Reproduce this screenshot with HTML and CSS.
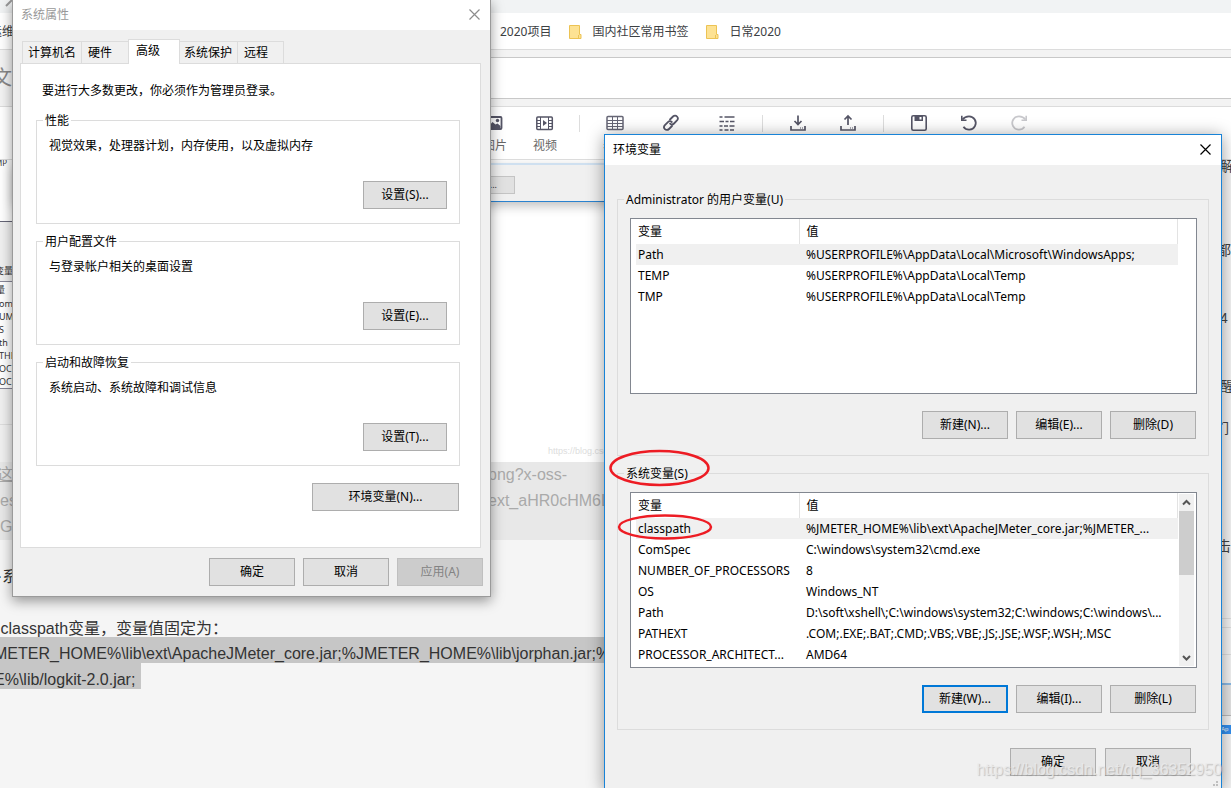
FILE: index.html
```html
<!DOCTYPE html>
<html lang="zh-CN">
<head>
<meta charset="utf-8">
<title>环境变量</title>
<link rel="stylesheet" href="styles.css">
</head>
<body>
<div class="desktop">

  <main class="browser">
    <div class="tabstrip"><svg class="tab-close" width="14" height="8" viewBox="0 0 14 8"><path d="M6 6L12 0" stroke="#999" stroke-width="2" fill="none"/></svg></div>
    <nav class="bookmarks">
      <a class="bm-first" href="#">运维</a>
      <a href="#">2020项目</a>
      <a href="#"><svg class="folder" width="13" height="15" viewBox="0 0 13 15"><path d="M.5.5h10v9h1.5v4H.5z" fill="#fde293" stroke="#ecc354"/><path d="M9.500 10v3.500" stroke="#ecc354"/></svg>国内社区常用书签</a>
      <a href="#"><svg class="folder" width="13" height="15" viewBox="0 0 13 15"><path d="M.5.5h10v9h1.5v4H.5z" fill="#fde293" stroke="#ecc354"/><path d="M9.500 10v3.500" stroke="#ecc354"/></svg>日常2020</a>
    </nav>
    <div class="title-row">
      <label class="title-label" for="title">文</label>
      <input class="title-input" id="title" type="text">
    </div>
    <div class="toolbar">
      <button class="tool"><svg width="18" height="18" viewBox="0 0 18 18"><rect x="1.500" y="3" width="14" height="12" rx="1" fill="none" stroke="#555566" stroke-width="1.800"/><path d="M3 12l3.500-4 3 2.500 2-1 3 2.500v2H3z" fill="#555566"/><circle cx="11.500" cy="6.500" r="1.700" fill="#555566"/></svg><span>图片</span></button>
      <button class="tool"><svg width="18" height="18" viewBox="0 0 18 18" fill="none" stroke="#555566"><rect x=".8" y="3" width="15.500" height="12.500" rx="1" stroke-width="1.500"/><path d="M4.500 3v12M12.500 3v12M1 6.500h3.500M1 9.500h3.500M1 12.500h3.500M12.500 6.500H16M12.500 9.500H16M12.500 12.500H16"/><path d="M7 6v6l4-3z" fill="#555566" stroke="none"/></svg><span>视频</span></button>
      <i class="sep sep-a"></i>
      <button class="tool wide"><svg width="18" height="18" viewBox="0 0 18 18" fill="none" stroke="#666675"><rect x="1" y="2.500" width="16" height="13" rx="1" stroke-width="1.500"/><path d="M1 6.500h16M1 9.500h16M1 12.500h16M6.500 3v12M11.500 3v12"/></svg><span>表格</span></button>
      <button class="tool wide"><svg width="18" height="18" viewBox="0 0 18 18" fill="none" stroke="#555566" stroke-width="1.800" stroke-linecap="round"><path d="M8 5.500l3-3c1.300-1.300 3-1.100 4 0s1.200 2.700 0 4l-3 3c-1.200 1.200-2.700 1.200-3.900.1"/><path d="M10 12l-3 3c-1.300 1.300-3 1.200-4.100.100s-1.200-2.700 0-4l3-3c1.200-1.200 2.700-1.200 3.900-.1"/></svg><span>超链接</span></button>
      <button class="tool wide"><svg width="18" height="18" viewBox="0 0 18 18" stroke="#555566" stroke-width="1.600"><path d="M1.500 3h3M6.500 3h10M1.500 7.500h4.500M7.500 7.500h3M12 7.500h4.500M1.500 12h3M6 12h4M11.500 12h5M1.500 16h3M6.500 16h4M12 16h4"/></svg><span>摘要</span></button>
      <i class="sep sep-b"></i>
      <button class="tool"><svg width="18" height="18" viewBox="0 0 18 18" fill="none" stroke="#555566" stroke-width="1.700"><path d="M9 1.500v8.500M5.500 7L9 10.500 12.500 7M2 12v4h14v-4"/><path d="M11 14h1M13 14h1" stroke-width="1"/></svg><span>导入</span></button>
      <button class="tool"><svg width="18" height="18" viewBox="0 0 18 18" fill="none" stroke="#555566" stroke-width="1.700"><path d="M9 11V2M5.500 5.500L9 2l3.500 3.500M2 12v4h14v-4"/><path d="M11 14h1M13 14h1" stroke-width="1"/></svg><span>导出</span></button>
      <i class="sep sep-c"></i>
      <button class="tool"><svg width="18" height="18" viewBox="0 0 18 18"><rect x="1.800" y="1.800" width="14.400" height="14.400" rx="1.500" fill="none" stroke="#555566" stroke-width="1.600"/><path d="M4.500 2h8.500v5H4.500z" fill="#555566"/><path d="M9.500 3h2v2.500h-2z" fill="#fff"/></svg><span>保存</span></button>
      <button class="tool"><svg width="18" height="18" viewBox="0 0 18 18" fill="none" stroke="#555566" stroke-width="1.800"><path d="M2.500 5.500C4.500 2.800 7 2.300 9 2.300a6.700 6.700 0 1 1-5.500 10.500"/><path d="M1.800 1.800v4.400h4.700" stroke-width="1.600"/></svg><span>撤销</span></button>
      <button class="tool"><svg width="18" height="18" viewBox="0 0 18 18" fill="none" stroke="#c8c8cc" stroke-width="1.800"><path d="M15.500 5.500C13.500 2.800 11 2.300 9 2.300a6.700 6.700 0 1 0 5.500 10.500"/><path d="M16.200 1.800v4.400h-4.700" stroke-width="1.600"/></svg><span>重做</span></button>
    </div>
    <div class="workspace">
      <section class="editor">
        <div class="figure">
          <div class="scrap">
            <div class="scrap-top">MP</div>
            <div class="scrap-head">变量</div>
            <div class="scrap-list"><p class="scrap-title">量</p><p>omSpec</p><p>UMBER</p><p>S</p><p>th</p><p>THEXT</p><p>OCES</p><p>OCES</p></div>
            <div class="scrap-mid"></div>
            <div class="scrap-low"></div>
          </div>
          <div class="shot">
            <div class="shot-window"><span class="shot-button">)...</span></div>
            <div class="shot-mark">https://blog.csdn.net</div>
          </div>
        </div>
        <div class="quote">
          <p><u>这里</u><span>png?x-oss-</span></p>
          <p><b>es</b><span>ext_aHR0cHM6Ly9</span></p>
          <p><b>G4</b></p>
        </div>
        <p class="line gap-a">·系统</p>
        <p class="line gap-b">:classpath变量，变量值固定为：</p>
        <p class="line first"><mark>METER_HOME%\lib\ext\ApacheJMeter_core.jar;%JMETER_HOME%\lib\jorphan.jar;%JMETER_HOM</mark></p>
        <p class="line second"><mark>E%\lib/logkit-2.0.jar; </mark></p>
      </section>
      <aside class="preview">
        <p class="pa">解</p><p class="pb">都</p><p class="pc">4</p><p class="pc">醒</p><p class="pd">们</p><p class="pe">击</p>
        <div class="bar bar-a"></div><div class="bar bar-b"></div><div class="bar bar-c"></div><div class="bar bar-d"></div><div class="bar bar-e"></div><div class="bar bar-f">Ap</div>
      </aside>
    </div>
  </main>

  <section class="window props" aria-label="系统属性">
    <header class="titlebar muted"><span>系统属性</span><button class="close" aria-label="关闭"><svg width="11" height="11" viewBox="0 0 11 11"><path d="M.5.5l10 10M10.500.5l-10 10" stroke="#8c8c8c" stroke-width="1.200"/></svg></button></header>
    <div class="props-body">
      <div class="tabs">
        <button class="tab t-name">计算机名</button><button class="tab t-hw">硬件</button><button class="tab t-adv active">高级</button><button class="tab t-prot">系统保护</button><button class="tab t-remote">远程</button>
      </div>
      <div class="panel">
        <p class="note">要进行大多数更改，你必须作为管理员登录。</p>
        <fieldset class="group"><legend>性能</legend><p>视觉效果，处理器计划，内存使用，以及虚拟内存</p><button class="btn set">设置(S)...</button></fieldset>
        <fieldset class="group"><legend>用户配置文件</legend><p>与登录帐户相关的桌面设置</p><button class="btn set">设置(E)...</button></fieldset>
        <fieldset class="group"><legend>启动和故障恢复</legend><p>系统启动、系统故障和调试信息</p><button class="btn set">设置(T)...</button></fieldset>
        <button class="btn env-btn">环境变量(N)...</button>
      </div>
      <footer class="props-actions"><button class="btn">确定</button><button class="btn">取消</button><button class="btn" disabled>应用(A)</button></footer>
    </div>
  </section>

  <section class="window env" aria-label="环境变量">
    <header class="titlebar"><span>环境变量</span><button class="close" aria-label="关闭"><svg width="11" height="11" viewBox="0 0 11 11"><path d="M.5.5l10 10M10.500.5l-10 10" stroke="#000" stroke-width="1.200"/></svg></button></header>
    <div class="env-body">
      <fieldset class="vars">
        <legend>Administrator 的用户变量(U)</legend>
        <div class="list">
          <table>
            <thead><tr><th class="name">变量</th><th>值</th></tr></thead>
            <tbody>
              <tr class="sel"><td>Path</td><td>%USERPROFILE%\AppData\Local\Microsoft\WindowsApps;</td></tr>
              <tr><td>TEMP</td><td>%USERPROFILE%\AppData\Local\Temp</td></tr>
              <tr><td>TMP</td><td>%USERPROFILE%\AppData\Local\Temp</td></tr>
            </tbody>
          </table>
        </div>
        <div class="row"><button class="btn">新建(N)...</button><button class="btn">编辑(E)...</button><button class="btn">删除(D)</button></div>
      </fieldset>
      <fieldset class="vars">
        <legend>系统变量(S)</legend>
        <div class="list">
          <table>
            <thead><tr><th class="name">变量</th><th>值</th></tr></thead>
            <tbody>
              <tr class="sel"><td>classpath</td><td>%JMETER_HOME%\lib\ext\ApacheJMeter_core.jar;%JMETER_...</td></tr>
              <tr><td>ComSpec</td><td>C:\windows\system32\cmd.exe</td></tr>
              <tr><td>NUMBER_OF_PROCESSORS</td><td>8</td></tr>
              <tr><td>OS</td><td>Windows_NT</td></tr>
              <tr><td>Path</td><td>D:\soft\xshell\;C:\windows\system32;C:\windows;C:\windows\...</td></tr>
              <tr><td>PATHEXT</td><td>.COM;.EXE;.BAT;.CMD;.VBS;.VBE;.JS;.JSE;.WSF;.WSH;.MSC</td></tr>
              <tr><td>PROCESSOR_ARCHITECT...</td><td>AMD64</td></tr>
            </tbody>
          </table>
          <div class="scrollbar">
            <svg width="15" height="17" viewBox="0 0 15 17"><path d="M4 10.500l3.500-3.500 3.500 3.500" fill="none" stroke="#555" stroke-width="2"/></svg>
            <div class="thumb"></div>
            <svg width="15" height="17" viewBox="0 0 15 17"><path d="M4 7l3.500 3.500L11 7" fill="none" stroke="#555" stroke-width="2"/></svg>
          </div>
        </div>
        <div class="row"><button class="btn default">新建(W)...</button><button class="btn">编辑(I)...</button><button class="btn">删除(L)</button></div>
      </fieldset>
      <footer class="row env-actions"><button class="btn">确定</button><button class="btn">取消</button></footer>
    </div>
    <svg class="grip" width="6" height="6" viewBox="0 0 6 6" fill="#bfbfbf"><path d="M3 0h2v2H3zM0 3h2v2H0zM3 3h2v2H3z"/></svg>
  </section>

  <svg class="marks" width="110" height="96" viewBox="0 0 110 96" fill="none" stroke="#ed1c24" stroke-width="2.500"><ellipse cx="54.500" cy="20" rx="49" ry="17"/><ellipse cx="60" cy="79" rx="46" ry="11.500"/></svg>
  <div class="watermark">https://blog.csdn.net/qq_36352950</div>
</div>
</body>
</html>
```
FILE: styles.css
```css
* { box-sizing: border-box; }
body {
  margin: 0;
  font: 12px/18px "Noto Sans", "Noto Sans CJK SC", sans-serif;
  color: #000;
}
p, fieldset { margin: 0; padding: 0; }
button { font: inherit; color: inherit; padding: 0; border: 0; background: none; }
a { color: inherit; text-decoration: none; }
.desktop { position: relative; height: 100vh; overflow: hidden; background: #f5f5f5; }

/* browser behind the dialogs */
.browser { display: flex; flex-direction: column; height: 100%; }
.tabstrip { height: 13px; background: #f1f3f4; flex: none; }
.tab-close { display: block; }
.bookmarks {
  display: flex; align-items: center; gap: 18px; flex: none;
  height: 37px; padding-top: 2px; background: #fff; border-bottom: 1px solid #dcdcdc; color: #3c4043;
}
.bookmarks a { display: flex; align-items: center; }
.bookmarks .bm-first { width: 482px; text-indent: -10px; }
.folder { margin-right: 10px; }
.title-row { display: flex; flex: none; height: 57px; padding: 7px 0; background: #f3f3f3; border-bottom: 1px solid #dcdcdc; }
.title-label { width: 100px; font-size: 20px; line-height: 42px; color: #888; text-indent: -8px; }
.title-input { flex: 1; border: 1px solid #c8c8c8; border-right: 0; background: #fff; }
.toolbar {
  display: flex; flex: none; height: 53px; padding: 7px 0 0 470px;
  background: #fff; border-bottom: 1px solid #dcdcdc; color: #666;
}
.tool { display: flex; flex-direction: column; align-items: center; gap: 5px; width: 50px; }
.tool.wide { width: 56px; }
.sep { width: 1px; height: 17px; margin-top: 1px; background: #ddd; }
.sep-a { margin-left: 9px; margin-right: 7px; }
.sep-b { margin-left: 7px; margin-right: 10px; }
.sep-c { margin-left: 10px; margin-right: 10px; }

.workspace { display: flex; flex: 1; min-height: 0; }
.editor { flex: 1; min-width: 0; overflow: hidden; white-space: nowrap; color: #333; font: 16px/26px "Liberation Sans", "Noto Sans CJK SC", sans-serif; }
.figure { display: flex; height: 302px; background: #fff; }
.scrap { width: 13px; overflow: hidden; font: 9px/13px "Noto Sans", "Noto Sans CJK SC", sans-serif; background: #f0f0f0; }
.scrap-top { height: 62px; text-indent: -5px; background: #fff; border-bottom: 1px solid #667; line-height: 6px; font-size: 8px; }
.scrap-head { height: 59px; padding-top: 42px; text-indent: -5px; }
.scrap-list { background: #fff; border: solid #889; border-width: 1px 0; }
.scrap-list p { text-indent: -1px; }
.scrap-list .scrap-title { line-height: 15px; text-indent: -4px; }
.scrap-mid { height: 36px; border-bottom: 1px solid #ddd; }
.scrap-low { height: 30px; }
.shot { flex: 1; padding-top: 3px; }
.shot-window { height: 39px; padding: 11px 0 0 448px; background: #f0f0f0; border-top: 2px solid #cfe0f0; border-bottom: 1px solid #2a82cf; box-shadow: 0 4px 10px rgba(0, 0, 0, .25); }
.shot-button { display: block; width: 54px; height: 18px; border: 1px solid #c4c4c4; background: #e1e1e1; font: 9px/15px "Noto Sans", sans-serif; text-align: right; padding-right: 17px; }
.shot-mark { padding: 240px 0 0 535px; font: 9px/18px "Liberation Sans", sans-serif; color: #ddd; }
.quote { background: #e8e8e8; color: #aaa; }
.quote p { display: grid; grid-template-columns: 488px 1fr; height: 26px; }
.quote b { font-weight: 400; }
.quote u { text-indent: -3px; }
.line { height: 26px; }
.gap-a { margin-top: 24px; text-indent: -3px; }
.gap-b { margin-top: 26px; height: 21px; text-indent: -4px; }
.line mark { display: block; width: max-content; height: 26px; padding-top: 8px; line-height: 18px; background: #c6c6c6; color: inherit; }
.first { margin-left: -6px; }
.second { margin-left: -6px; }
.second mark { padding-right: 6px; }
.preview { width: 10px; overflow: hidden; color: #444; font: 14px/20px "Liberation Sans", "Noto Sans CJK SC", sans-serif; background: #f5f5f5; }
.preview p { height: 20px; text-indent: -1px; }
.preview .pa { margin-top: -4px; }
.preview .pb { margin-top: 64px; text-indent: -4px; }
.preview .pc { margin-top: 48px; }
.preview .pd { margin-top: 22px; text-indent: -6px; }
.preview .pe { margin-top: 98px; text-indent: -4px; }
.bar { border-bottom: 1px solid #e0e0e0; height: 9px; }
.bar-a { margin-top: 54px; }
.bar-c { height: 27px; }
.bar-d { height: 30px; border-bottom: 2px solid #8dbbe6; }
.bar-e { height: 31px; margin-bottom: 9px; background: #e6e6e6; border-color: #bbb; }
.bar-f { height: 9px; border: 0; background: #3390f0; color: #fff; font-size: 6px; line-height: 9px; }

/* dialogs */
.window { position: absolute; background: #f0f0f0; }
.titlebar { display: flex; align-items: center; justify-content: space-between; height: 30px; padding: 0 10px 0 8px; background: #fff; }
.titlebar.muted { color: #999; }
.close { display: flex; padding-bottom: 2px; }
.btn { width: 86px; height: 28px; border: 1px solid #adadad; background: #e1e1e1; text-align: center; line-height: 24px; }
.btn.default { border: 2px solid #0078d7; line-height: 22px; }
.btn:disabled { background: #ccc; border-color: #bfbfbf; color: #838383; }
legend { line-height: 17px; padding: 0 2px; }

.props { left: 12px; top: -1px; width: 479px; border: 1px solid #9a9a9a; box-shadow: 0 4px 12px rgba(0, 0, 0, .4); }
.props-body { padding: 9px 7px 10px; }
.tabs { display: flex; align-items: flex-end; height: 24px; padding-left: 2px; }
.tab { height: 22px; padding-left: 6px; text-align: left; border: 1px solid #dcdcdc; border-width: 1px 1px 0 0; }
.t-name { width: 60px; border-left-width: 1px; padding-left: 5px; }
.t-hw { width: 46px; border-right: 0; }
.t-adv { width: 52px; }
.t-prot { width: 58px; padding-left: 4px; }
.t-remote { width: 46px; }
.tab.active { height: 25px; margin-bottom: -1px; padding: 0 0 2px 7px; background: #fff; border-left-width: 1px; }
.panel { display: flex; flex-direction: column; margin-right: 2px; padding: 18px 20px 36px 15px; background: #fff; border: 1px solid #dcdcdc; }
.note { padding-left: 6px; margin-bottom: 12px; }
.group { display: flex; flex-direction: column; margin-bottom: 9px; padding: 8px 12px 14px; border: 1px solid #dcdcdc; }
.group legend { margin-left: -6px; }
.set { width: 84px; margin-top: 26px; align-self: flex-end; }
.env-btn { width: 147px; margin: 8px 1px 0 0; align-self: flex-end; }
.props-actions { display: flex; justify-content: flex-end; gap: 8px; margin-top: 10px; }

.env { left: 604px; top: 134px; width: 618px; border: 1px solid #1883d7; box-shadow: 0 2px 16px rgba(0, 0, 0, .4); }
.env-body { padding: 26px 12px 12px; }
.vars { min-width: 0; margin-bottom: 9px; padding: 10px 11px 16px 12px; border: 1px solid #dcdcdc; }
.vars legend { margin-left: -6px; }
.list { display: flex; justify-content: space-between; height: 176px; padding: 0 2px 0 5px; border: 1px solid #828790; background: #fff; overflow: hidden; }
table { width: 542px; height: min-content; border-collapse: collapse; table-layout: fixed; }
th { height: 25px; padding: 0 0 0 7px; border-right: 1px solid #e3e3e3; font-weight: 400; text-align: left; }
.name { width: 163px; }
td { height: 21px; padding: 0 0 0 2px; line-height: 18px; white-space: nowrap; }
td + td { padding-left: 7px; }
th.name { padding-left: 2px; }
.sel { background: #f0f0f0; }
.scrollbar { display: flex; flex-direction: column; width: 15px; margin: 1px 0; background: #f0f0f0; }
.thumb { height: 64px; margin-bottom: auto; background: #cdcdcd; }
.row { display: flex; justify-content: flex-end; gap: 8px; margin-top: 17px; padding-right: 1px; }
.env-actions { gap: 9px; margin-top: 18px; padding-right: 18px; }
.grip { position: absolute; right: 2px; bottom: 1px; }

/* overlays */
.marks { position: absolute; left: 605px; top: 448px; }
.watermark { position: absolute; right: 9px; bottom: 7px; font: 16px/22px "Liberation Sans", sans-serif; color: rgba(235, 235, 235, .85); text-shadow: 1px 1px 1px rgba(120, 120, 120, .4); }
```
